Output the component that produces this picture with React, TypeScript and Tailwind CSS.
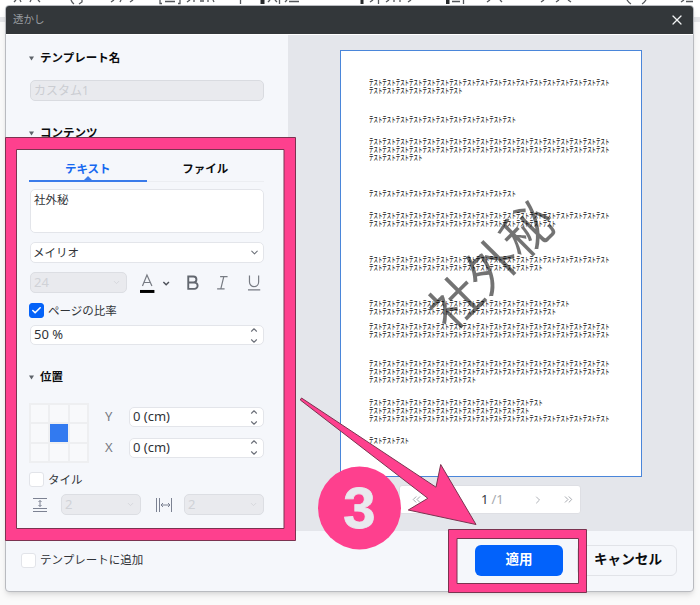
import { useState } from "react";
import type { ReactNode } from "react";
import { Check, ChevronDown, ChevronLeft, ChevronRight, ChevronUp, ChevronsLeft, ChevronsRight, X } from "lucide-react";

// gap above each paragraph and the number of repeats on each of its lines
const paragraphs = [
  { gap: "", lines: [18, 7] },
  { gap: "mt-[21px]", lines: [11] },
  { gap: "mt-[14px]", lines: [18, 18, 4] },
  { gap: "mt-[28px]", lines: [11] },
  { gap: "mt-[14px]", lines: [18, 14] },
  { gap: "mt-[28px]", lines: [18, 13] },
  { gap: "mt-[28px]", lines: [15, 14] },
  { gap: "mt-[7px]", lines: [18, 18] },
  { gap: "mt-[21px]", lines: [18, 18, 8] },
  { gap: "mt-[15px]", lines: [13, 12, 18] },
  { gap: "mt-[14px]", lines: [3] },
];

function SectionTitle({ children, className = "" }: { children: ReactNode; className?: string }) {
  return (
    <h2 className={`flex h-5 items-center text-[11.500px] font-bold text-[#0b0c0e] ${className}`}>
      <svg width="5" height="5" viewBox="0 0 5 5" className="mr-[6px]">
        <path d="M0 0.5h5L2.5 4.5z" fill="#5d6269" />
      </svg>
      {children}
    </h2>
  );
}

function Spinner({ value, className = "" }: { value: string; className?: string }) {
  return (
    <div className={`flex h-5 items-center justify-between rounded-[5px] border border-[#e3e5ea] bg-white pr-[4px] pl-[3px] text-[13px] text-[#303338] ${className}`}>
      <span>{value}</span>
      <span className="flex flex-col gap-[1px] text-[#6c7079]">
        <ChevronUp size={10} strokeWidth={2.6} />
        <ChevronDown size={10} strokeWidth={2.6} />
      </span>
    </div>
  );
}

function DisabledSelect({ value, className = "" }: { value: string; className?: string }) {
  return (
    <div className={`flex h-[21px] items-center justify-between rounded-[5px] border border-[#dcdee3] bg-[#e9eaee] pr-[5px] pl-[3px] text-[13px] text-[#d0d2d7] ${className}`}>
      <span>{value}</span>
      <ChevronDown size={9} strokeWidth={2} />
    </div>
  );
}

function Checkbox({ checked, onClick }: { checked: boolean; onClick: () => void }) {
  return (
    <button
      onClick={onClick}
      className={`flex size-[15px] shrink-0 items-center justify-center rounded-[3px] border ${
        checked ? "border-[#0563f8] bg-[#0563f8]" : "border-[#e2e4e9] bg-white"
      }`}
    >
      {checked && <Check size={11} strokeWidth={3.5} className="text-white" />}
    </button>
  );
}

function Settings() {
  const [tab, setTab] = useState("テキスト");
  const [ratio, setRatio] = useState(true);
  const [tile, setTile] = useState(false);

  return (
    <div className="flex w-[282px] shrink-0 flex-col bg-[#f5f7fb] pt-[13px] pr-6 pl-[23px]">
      <SectionTitle>テンプレート名</SectionTitle>
      <div className="ml-px mt-[12px] flex h-[21px] items-center rounded-[5px] border border-[#d9dbe0] bg-[#e9eaee] pl-[3px] text-[12px] text-[#cbcdd2]">
        カスタム1
      </div>
      <SectionTitle className="mt-[22px]">コンテンツ</SectionTitle>

      <div className="mt-[15px] flex border-b border-[#eceef2]">
        {["テキスト", "ファイル"].map((name) => (
          <button
            key={name}
            onClick={() => setTab(name)}
            className={`relative h-[23px] w-1/2 pb-[2px] text-[11.500px] font-bold ${tab === name ? "text-[#1668f0]" : "text-[#0b0c0e]"}`}
          >
            {name}
            {tab === name && (
              <svg width="118" height="6" viewBox="0 0 118 6" className="absolute -bottom-px left-0">
                <path d="M0 4h55l4-4 4 4h55v2H0z" fill="#3a7bea" />
              </svg>
            )}
          </button>
        ))}
      </div>
      <div className="ml-px mt-[7px] h-[44px] rounded-[5px] border border-[#e3e5ea] bg-white pl-[3px] text-[11.500px] leading-[19px] text-[#303338]">
        社外秘
      </div>
      <div className="ml-px mt-[9px] flex h-[21px] items-center justify-between rounded-[5px] border border-[#e3e5ea] bg-white pr-[3px] pl-[2px] text-[11.500px] text-[#303338]">
        メイリオ
        <ChevronDown size={11} strokeWidth={2.2} className="text-[#6c7079]" />
      </div>

      <div className="ml-px mt-[9px] flex h-[21px] items-center">
        <DisabledSelect value="24" className="w-[97px]" />
        <svg width="128" height="20" viewBox="0 0 128 20" className="ml-[10px]" fill="none" stroke="#777b83" strokeWidth="1.2">
          <path d="M5.500 13L10 2l5 11M7 9.500h6.200" />
          <path d="M3 18.500h14.500" stroke="#000" strokeWidth="3" />
          <path d="M26.500 9l2.800 2.700 2.800-2.700" stroke="#4d5159" strokeWidth="1.500" />
          <path d="M51.500 3.500h5.200a3 3 0 010 6h-5.200zM51.500 9.500h6.200a3.200 3.200 0 010 6.400h-6.200z" stroke="#62676f" strokeWidth="1.900" />
          <path d="M83.500 3.500H91M80.500 16H88M87.200 3.500l-3 12.500" />
          <path d="M113 2.500V9a4.600 4.600 0 009.200 0V2.500M111.500 17h12.300" />
        </svg>
      </div>
      <div className="mt-[9px] flex h-[17px] items-center gap-1 text-[11.500px] text-[#303338]">
        <Checkbox checked={ratio} onClick={() => setRatio(!ratio)} />
        ページの比率
      </div>
      <Spinner value="50 %" className="ml-px mt-[6px]" />

      <SectionTitle className="mt-[22px]">位置</SectionTitle>
      <div className="mt-[16px] flex h-[60px]">
        <div className="grid h-[60px] w-[60px] grid-cols-3 gap-[2px] border-2 border-[#eeeff1] bg-[#eeeff1]">
          {Array.from({ length: 9 }, (_, i) => (
            <div key={i} className={i === 4 ? "bg-[#327af0]" : "bg-[#f8f9fb]"} />
          ))}
        </div>
        <div className="ml-[16px] flex flex-1 flex-col gap-[10.500px] pt-[4px] text-[13px] text-[#777b83]">
          {["Y", "X"].map((axis) => (
            <div key={axis} className="flex items-center">
              <span className="w-[24px]">{axis}</span>
              <Spinner value="0 (cm)" className="flex-1" />
            </div>
          ))}
        </div>
      </div>
      <div className="mt-[8px] flex h-[17px] items-center gap-1 text-[11.500px] text-[#303338]">
        <Checkbox checked={tile} onClick={() => setTile(!tile)} />
        タイル
      </div>
      <div className="mt-[6px] flex items-center">
        <svg width="16" height="16" viewBox="0 0 16 16" className="ml-[3px]" fill="none" stroke="#7c8292">
          <path d="M1 1.500h14M1 11.500h14M1 14.500h14M8 3.500v6M6.500 5L8 3.500 9.500 5M6.500 8L8 9.500 9.500 8" />
        </svg>
        <DisabledSelect value="2" className="ml-[13px] w-[80px]" />
        <svg width="18" height="16" viewBox="0 0 18 16" className="ml-[14px]" fill="none" stroke="#7c8292">
          <path d="M1.500 1v14M4.500 1v14M16.500 1v14M6 8h9M8 6L6 8l2 2M13 6l2 2-2 2" />
        </svg>
        <DisabledSelect value="2" className="ml-[11px] w-[80px]" />
      </div>
    </div>
  );
}

function Preview() {
  return (
    <div className="flex flex-1 flex-col bg-[#e4e6eb] pt-[15px] pl-[52px]">
      <div className="relative h-[427px] w-[302px] border border-[#4a86da] bg-white pt-[28px] pl-[28px]">
        {paragraphs.map((p, i) => (
          <div key={i} className={p.gap}>
            {p.lines.map((n, j) => (
              <p key={j} className="h-2 w-max origin-left scale-x-[0.636] text-[7px] leading-[8px] font-medium whitespace-nowrap text-[#111]">
                {"テスト".repeat(n)}
              </p>
            ))}
          </div>
        ))}
        <div className="absolute top-[184px] left-[73px] -rotate-45 text-[51px] leading-[60px] font-normal whitespace-nowrap text-black/55">
          社外秘
        </div>
      </div>
      <div className="mt-[8px] ml-[59px] flex h-[29px] w-[182px] items-center rounded-[3px] border border-[#dedfe4] bg-white pr-[5px] pl-[10px] text-[13px] text-[#a5a8ae]">
        <ChevronsLeft size={13} strokeWidth={1.8} />
        <ChevronLeft size={12} strokeWidth={1.8} className="ml-[18px]" />
        <span className="ml-[28px] text-[#36393f]">1</span>
        <span className="ml-[3px]">/1</span>
        <ChevronRight size={12} strokeWidth={1.8} className="ml-auto" />
        <ChevronsRight size={13} strokeWidth={1.8} className="ml-[18px]" />
      </div>
    </div>
  );
}

// lower edge of the editor toolbar, mostly hidden by the dialog
function ToolbarEdge() {
  return (
    <svg width="700" height="5" viewBox="0 0 700 5" fill="none" stroke="#54575b" strokeWidth="1.300">
      <path d="M14 2l2-2M20 0l1 2M31 0l-1 2M38 0l2 2M111 2l3-2M121 0l-1 2M130 2l3-2M187 2l3-2M194 0v2M200 1h4M208 0v2M213 0l1 2" />
      <path d="M71 0q1 2.500 3 4M82 0v2l-3 2M160 0v3.500h2M165 1.500h10M180 0v3.500h-2M240.500 0v4" />
      <path d="M268 2l2-2M275 0l2 2M279.500 0v4M285 2l2-2M289 1.500h10M370 2l3-2M378.500 0v4M386 2l3-2M394 0v2M400 0v2M408 2l3-2" />
      <path d="M452 1.500h8M463.500 0v4M487 2l3-2M500 0l2 2M541 2l3-2M556 2l3-2M568 0l3 2M627 0q2 3 4 4M646 0q-2 3-4 4M681 2l3-2M686 1.500h7" />
      <path d="M260.500 0h4v4h-4zM360.500 0h3v4h-3zM446 0h3.500v4H446z" fill="#27292b" stroke="none" />
    </svg>
  );
}

// pink frames, arrow and step number on top of the dialog
function Callouts() {
  return (
    <svg width="700" height="605" viewBox="0 0 700 605" className="pointer-events-none absolute inset-0">
      <g fill="#fe408e" stroke="#7b3350" strokeWidth="1" fillRule="evenodd" strokeLinejoin="round">
        <path d="M5.500 137.500h290v403h-290zM16.500 149.500v379h267.500v-379z" />
        <path d="M448.500 529.500h138v63h-138zM457 538.500v45h121.500v-45z" />
      </g>
      <circle cx="359.500" cy="508" r="41.500" fill="#fe408e" />
      <path
        d="M301.500 398L436 487.200l4.700-22.700 35.300 60-67.700-14.500 19.500-11.700L300.300 400z"
        fill="#fe408e"
        stroke="#7b3350"
        strokeLinejoin="round"
      />
      <text x="359.500" y="528" textAnchor="middle" className="fill-[#e9e9ee] font-['Liberation_Sans'] text-[58px] font-bold" stroke="#e9e9ee" strokeWidth="0.8">
        3
      </text>
    </svg>
  );
}

export default function App() {
  const [save, setSave] = useState(false);

  return (
    <div className="relative h-[605px] w-[700px] overflow-hidden bg-[#fafafa] font-['Noto_Sans','Noto_Sans_CJK_JP',sans-serif]">
      <div className="h-[17px] bg-white">
        <ToolbarEdge />
      </div>
      <div className="h-[5px] bg-[#e5e6e9]" />
      <div className="absolute top-[5px] left-[5px] flex h-[587px] w-[689px] flex-col overflow-hidden rounded-[4px] border border-[#b9bbc0] bg-[#f5f7fb] shadow-md">
        <div className="flex h-[28px] shrink-0 items-center justify-between bg-[#33373a] pr-[8px] pl-[7px] text-[10.500px] text-[#9b9ea2]">
          透かし
          <X size={16} strokeWidth={1.800} className="text-[#f2f3f4]" />
        </div>
        <div className="flex h-[497px] shrink-0 border-t border-white">
          <Settings />
          <Preview />
        </div>
        <div className="flex flex-1 items-center pr-4 pb-[2px] pl-[15px] text-[11.500px] text-[#303338]">
          <Checkbox checked={save} onClick={() => setSave(!save)} />
          <span className="ml-1">テンプレートに追加</span>
          <button className="ml-auto h-[31px] w-[88px] rounded-[6px] bg-[#0262fb] pb-[2px] text-[13.500px] font-bold text-white">適用</button>
          <button className="ml-[14px] h-[31px] w-[100px] rounded-[6px] border border-[#e1e3e8] pb-[2px] pl-[2px] text-[13.600px] font-bold text-[#0b0c0e]">
            キャンセル
          </button>
        </div>
      </div>
      <Callouts />
    </div>
  );
}
